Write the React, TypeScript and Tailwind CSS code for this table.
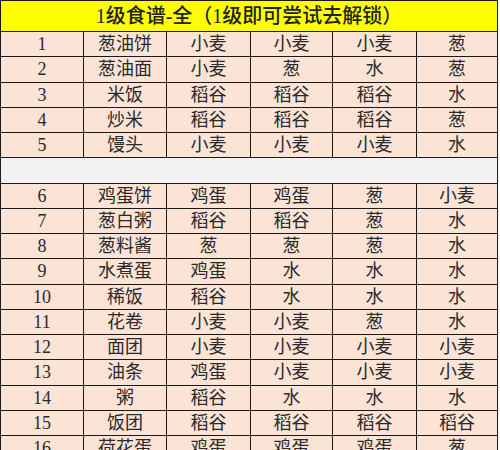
const rowsA = [
  ["1", "葱油饼", "小麦", "小麦", "小麦", "葱"],
  ["2", "葱油面", "小麦", "葱", "水", "葱"],
  ["3", "米饭", "稻谷", "稻谷", "稻谷", "水"],
  ["4", "炒米", "稻谷", "稻谷", "稻谷", "葱"],
  ["5", "馒头", "小麦", "小麦", "小麦", "水"],
];

const rowsB = [
  ["6", "鸡蛋饼", "鸡蛋", "鸡蛋", "葱", "小麦"],
  ["7", "葱白粥", "稻谷", "稻谷", "葱", "水"],
  ["8", "葱料酱", "葱", "葱", "葱", "水"],
  ["9", "水煮蛋", "鸡蛋", "水", "水", "水"],
  ["10", "稀饭", "稻谷", "水", "水", "水"],
  ["11", "花卷", "小麦", "小麦", "葱", "水"],
  ["12", "面团", "小麦", "小麦", "小麦", "小麦"],
  ["13", "油条", "鸡蛋", "小麦", "小麦", "小麦"],
  ["14", "粥", "稻谷", "水", "水", "水"],
  ["15", "饭团", "稻谷", "稻谷", "稻谷", "稻谷"],
  ["16", "荷花蛋", "鸡蛋", "鸡蛋", "鸡蛋", "葱"],
];

function Row({ cells }: { cells: string[] }) {
  return (
    <div className="grid grid-cols-[83px_83px_84px_82px_84px_81px]">
      {cells.map((c, i) => (
        <div
          key={i}
          className="flex h-[25.25px] items-center justify-center border-b border-r border-[#1a1a1a] bg-[#fbe4d6] text-[18px] leading-none text-[#2a2a2a]"
        >
          {c}
        </div>
      ))}
    </div>
  );
}

export default function App() {
  return (
    <div
      className="h-[450px] w-[500px] overflow-hidden bg-white"
      style={{ fontFamily: '"Liberation Serif", "Noto Sans CJK SC", serif' }}
    >
      <div className="w-[498px] border-l border-t border-[#1a1a1a]">
        <div className="flex h-[31px] items-center justify-center border-b border-r border-[#1a1a1a] bg-[#ffff00] text-[20px] font-medium leading-none text-[#222]">
          1级食谱-全（1级即可尝试去解锁）
        </div>
        {rowsA.map((r) => (
          <Row key={r[0]} cells={r} />
        ))}
        <div className="h-[25.25px] border-b border-r border-[#1a1a1a] bg-[#f2f2f2]" />
        {rowsB.map((r) => (
          <Row key={r[0]} cells={r} />
        ))}
      </div>
    </div>
  );
}
